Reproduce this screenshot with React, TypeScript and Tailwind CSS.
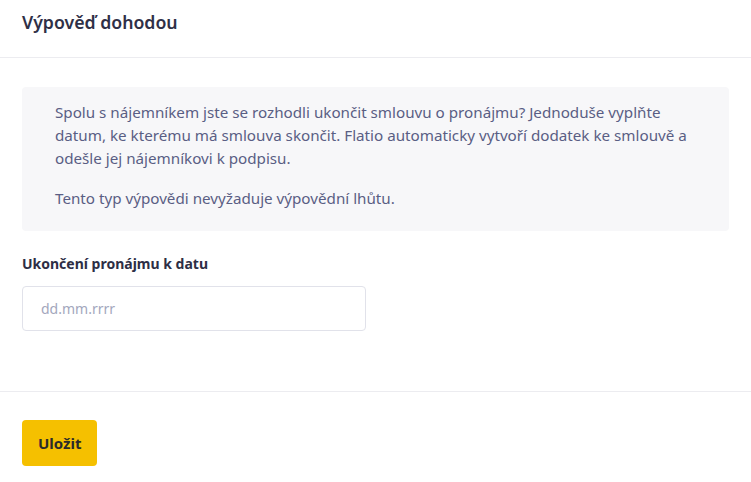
import React from 'react';

export default function App() {
  return (
    <div className="min-h-screen w-full bg-white font-['Noto_Sans','Lato',sans-serif] text-[#3c3c57]">
      {/* Header */}
      <div className="px-[22px] h-[58px] border-b border-[#ececf0] flex items-start pt-[9px]">
        <h1 className="text-[17.7px] font-semibold text-[#2f3047]">Výpověď dohodou</h1>
      </div>

      <div className="px-[22px] pt-[29px] pb-[60px] border-b border-[#ececf0]">
        {/* Info */}
        <div className="bg-[#f7f7f9] rounded-[4px] pl-[33px] pr-[40px] pt-[14px] pb-[21px] text-[15.2px] leading-[23px] text-[#5a5e84]">
          <p>
            Spolu s nájemníkem jste se rozhodli ukončit smlouvu o pronájmu? Jednoduše vyplňte datum, ke kterému má
            smlouva skončit. Flatio automaticky vytvoří dodatek ke smlouvě a odešle jej nájemníkovi k podpisu.
          </p>
          <p className="mt-[17px]">Tento typ výpovědi nevyžaduje výpovědní lhůtu.</p>
        </div>

        {/* Field */}
        <label className="block mt-[22px] text-[14px] font-bold text-[#2d2e45]">Ukončení pronájmu k datu</label>
        <input
          type="text"
          placeholder="dd.mm.rrrr"
          className="mt-[12px] w-[344px] h-[45px] rounded-[4px] border border-[#e1e2ea] px-[18px] text-[14px] placeholder:text-[#a3a7bd] outline-none"
        />
      </div>

      {/* Footer */}
      <div className="px-[22px] pt-[28px]">
        <button className="h-[46px] px-[16px] rounded-[4px] bg-[#f5c000] text-[15px] font-bold text-[#2b2b2b]">
          Uložit
        </button>
      </div>
    </div>
  );
}
